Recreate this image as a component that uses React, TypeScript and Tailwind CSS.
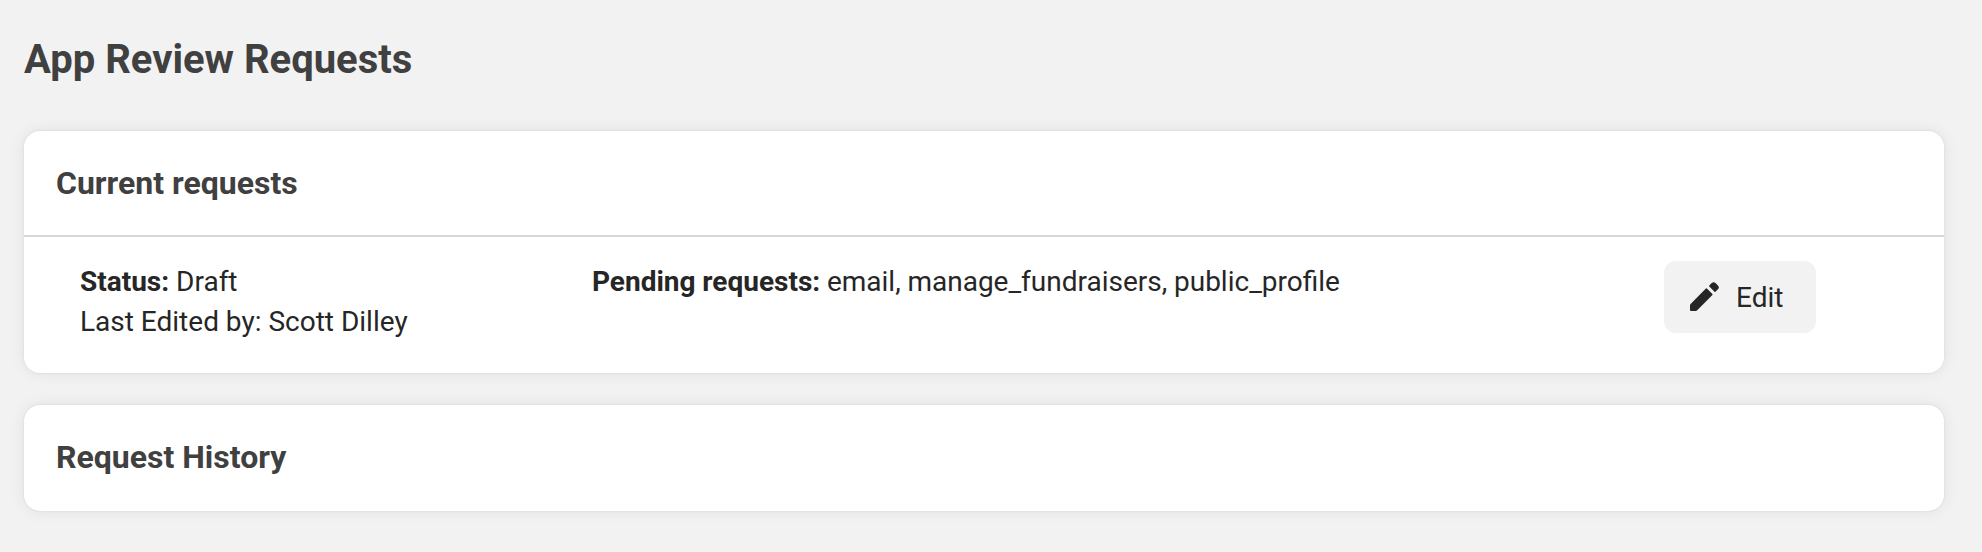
export default function App() {
  return (
    <main className="h-[552px] w-full bg-[#f2f2f2] pt-9 pl-6 pr-[38px] font-['Roboto',sans-serif] text-[#262626]">
      <h1 className="text-[40px] leading-[48px] font-bold text-[#404040]">App Review Requests</h1>
      <section className="mt-[47px] h-[242px] rounded-2xl bg-white shadow-[0_0_2px_rgba(0,0,0,0.1),0_0_16px_rgba(0,0,0,0.08)]">
        <header className="flex h-[106px] items-center border-b-2 border-[#d8d8d8] pl-8">
          <h2 className="text-[32px] leading-10 font-bold text-[#404040]">Current requests</h2>
        </header>
        <div className="flex pl-14 pt-6 text-[28px] leading-10">
          <div className="w-[512px] pt-px">
            <p><b>Status:</b> Draft</p>
            <p>Last Edited by: Scott Dilley</p>
          </div>
          <p className="w-[1072px] pt-px [word-spacing:-0.2px]"><b>Pending requests:</b> email, manage_fundraisers, public_profile</p>
          <button className="flex h-[72px] w-[152px] items-center rounded-xl bg-[#f2f2f2] pl-[26px]">
            <svg className="mb-px size-[29px]" viewBox="0 0 29 29" fill="currentColor">
              <path d="M0 23.2Q0 22.5.6 21.9L15.9 6.5Q16.4 6 16.9 6.5L22.4 12Q22.9 12.5 22.4 13L7.2 28.3Q6.6 29 5.8 29H1Q0 29 0 28Z" />
              <path d="M19.3 3.5L21.7 1.1Q23.6-.7 25.5 1.1L27.9 3.5Q29.8 5.4 27.9 7.3L25.5 9.7Q25 10.2 24.5 9.7L19.3 4.5Q18.8 4 19.3 3.5Z" />
            </svg>
            <span className="ml-[17px] pt-0.5">Edit</span>
          </button>
        </div>
      </section>
      <section className="mt-8 flex h-[106px] items-center rounded-2xl bg-white pb-0.5 pl-8 shadow-[0_0_2px_rgba(0,0,0,0.1),0_0_16px_rgba(0,0,0,0.08)]">
        <h2 className="text-[32px] leading-10 font-bold text-[#404040]">Request History</h2>
      </section>
    </main>
  );
}
